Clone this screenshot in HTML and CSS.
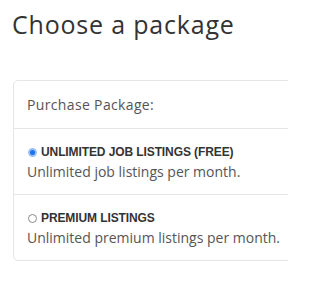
FILE: index.html
```html
<!DOCTYPE html>
<html>
<head>
<meta charset="utf-8">
<link rel="stylesheet" href="styles.css">
</head>
<body>
<div class="page">
  <h1 class="title">Choose a package</h1>
  <div class="card">
    <div class="card-header">Purchase Package:</div>
    <label class="option">
      <span class="option-head"><span class="radio checked"></span><span class="option-name">UNLIMITED JOB LISTINGS (FREE)</span></span>
      <span class="option-desc">Unlimited job listings per month.</span>
    </label>
    <label class="option">
      <span class="option-head"><span class="radio"></span><span class="option-name">PREMIUM LISTINGS</span></span>
      <span class="option-desc">Unlimited premium listings per month.</span>
    </label>
  </div>
</div>
</body>
</html>
```
FILE: styles.css
```css
html, body {
  margin: 0;
  padding: 0;
  background: #ffffff;
}
body {
  font-family: "Open Sans", sans-serif;
  color: #555;
}
.page {
  width: 288px;
  height: 288px;
  overflow: hidden;
}
.title {
  margin: 0;
  padding: 9px 0 0 12px;
  height: 80px;
  box-sizing: border-box;
  font-size: 25px;
  font-weight: 400;
  letter-spacing: 0.8px;
  color: #333;
  line-height: 30px;
}
.card {
  margin-left: 13px;
  width: 320px;
  border: 1px solid #e6e6e6;
  border-radius: 5px;
}
.card-header {
  height: 47px;
  padding-left: 13px;
  display: flex;
  align-items: center;
  font-size: 14px;
  letter-spacing: 0.35px;
  color: #555;
  border-bottom: 1px solid #e6e6e6;
}
.option {
  display: flex;
  flex-direction: column;
  padding: 16px 0 12px 13px;
  border-bottom: 1px solid #e6e6e6;
}
.option:last-child {
  border-bottom: none;
}
.option-head {
  display: flex;
  align-items: center;
  gap: 4px;
  height: 14px;
}
.radio {
  width: 9px;
  height: 9px;
  border-radius: 50%;
  border: 1px solid #8a8a8a;
  box-sizing: border-box;
  background: #fff;
  margin-left: 1px;
}
.radio.checked {
  border: 2px solid #9cc0f5;
  background: #1a73e8;
}
.option-name {
  font-family: "Liberation Sans", Arial, sans-serif;
  font-weight: 700;
  font-size: 12px;
  letter-spacing: -0.1px;
  line-height: 14px;
  color: #333;
}
.option-desc {
  font-size: 14px;
  line-height: 21px;
  color: #555;
  margin-top: 2px;
}
```
